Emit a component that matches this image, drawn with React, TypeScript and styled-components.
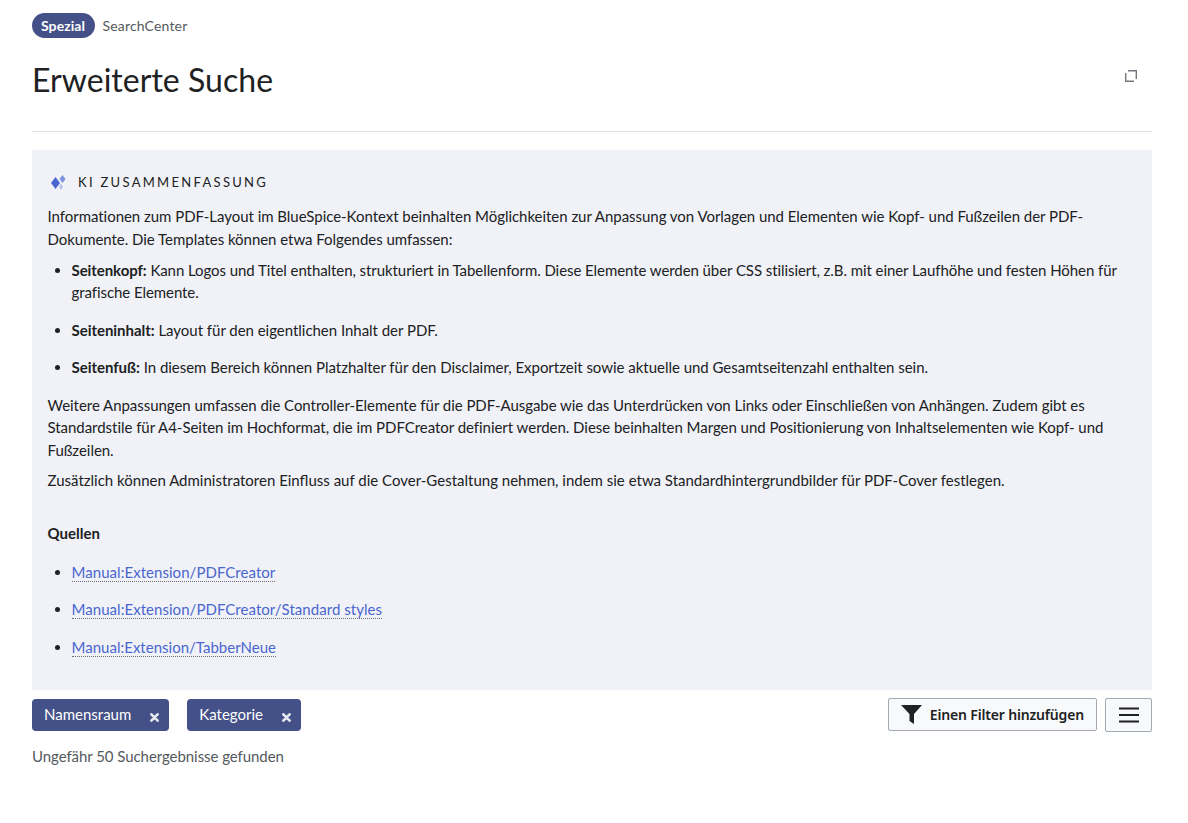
import React from 'react';
import styled, { createGlobalStyle } from 'styled-components';

const GlobalStyle = createGlobalStyle`
  html, body {
    margin: 0;
    padding: 0;
    background: #fff;
  }
  body {
    font-family: "Lato", "Liberation Sans", sans-serif;
    font-size: 15px;
    color: #202122;
  }
  * { box-sizing: border-box; }
`;

const Page = styled.div`
  width: 1188px;
  height: 823px;
  padding: 13px 36px 0 32px;
  overflow: hidden;
`;

const Crumbs = styled.div`
  display: flex;
  align-items: center;
  gap: 8px;
  height: 25px;
`;

const Pill = styled.span`
  display: inline-flex;
  align-items: center;
  height: 25px;
  padding: 0 9.5px 0 9px;
  border-radius: 13px;
  background: #445088;
  color: #fff;
  font-size: 14px;
  font-weight: 700;
  letter-spacing: 0.07px;
`;

const Crumb = styled.span`
  font-size: 14px;
  letter-spacing: 0.17px;
  color: #54595d;
`;

const TitleRow = styled.div`
  display: flex;
  justify-content: space-between;
  align-items: flex-start;
  height: 94px;
  padding-top: 22px;
  border-bottom: 1px solid #dfe0e3;
`;

const Title = styled.h1`
  margin: 0;
  font-size: 32px;
  font-weight: 400;
  line-height: 40px;
  letter-spacing: 0.04px;
  color: #202122;
`;

const ExpandButton = styled.span`
  display: block;
  margin: 8px 14px 0 0;
  width: 14px;
  height: 14px;
  color: #72777d;
`;

const Panel = styled.section`
  margin-top: 18px;
  height: 540px;
  padding: 22px 16px 0 15.5px;
  background: #f0f2f8;
  line-height: 22.5px;
`;

const PanelHead = styled.div`
  display: flex;
  align-items: center;
  gap: 12px;
  height: 20px;
  padding-left: 2.5px;
  font-size: 13px;
  letter-spacing: 2.3px;
  color: #202122;
`;

const Para = styled.p<{ $top?: number; $track?: number }>`
  margin: ${p => p.$top ?? 0}px 0 0;
  letter-spacing: ${p => p.$track ?? 0}px;
`;

const List = styled.ul<{ $top: number }>`
  margin: ${p => p.$top}px 0 0;
  padding: 0 0 0 24px;
`;

const Item = styled.li<{ $top?: number; $track?: number }>`
  margin-top: ${p => p.$top ?? 0}px;
  letter-spacing: ${p => p.$track ?? 0}px;
`;

const SourcesHead = styled.p`
  margin: 30.5px 0 0;
  font-weight: 700;
`;

const SourceLink = styled.a<{ $track?: number }>`
  color: #4a66cf;
  text-decoration: none;
  letter-spacing: ${p => p.$track ?? 0.045}px;
  border-bottom: 1px dotted #6b6f78;
`;

const FilterBar = styled.div`
  display: flex;
  justify-content: space-between;
  align-items: flex-start;
  margin-top: 8px;
`;

const Chips = styled.div`
  display: flex;
  gap: 18px;
  padding-top: 1px;
`;

const Chip = styled.span`
  display: inline-flex;
  align-items: center;
  justify-content: space-between;
  gap: 19px;
  height: 32px;
  padding: 0 10px 3px 12px;
  border-radius: 4px;
  background: #445088;
  color: #fff;
  font-size: 15px;
`;

const ChipClose = styled.svg`
  width: 9px;
  height: 9px;
  margin-top: 7px;
  fill: none;
  stroke: #e6e8f0;
  stroke-width: 2.7;
  stroke-linecap: round;
`;

const Actions = styled.div`
  display: flex;
  align-items: flex-start;
  gap: 8px;
`;

const Button = styled.button`
  display: inline-flex;
  align-items: center;
  justify-content: center;
  gap: 8px;
  height: 33px;
  padding: 0 12px;
  border: 1px solid #a2a9b1;
  border-radius: 2px;
  background: #f8f9fa;
  color: #202122;
  font-family: "Noto Sans", sans-serif;
  font-size: 14px;
  font-weight: 600;
  letter-spacing: -0.17px;
`;

const MenuButton = styled(Button)`
  width: 47px;
  height: 34px;
  padding: 0;
`;

const Count = styled.p`
  margin: 13px 0 0;
  color: #54595d;
  font-size: 15px;
  line-height: 22px;
  letter-spacing: -0.06px;
`;

const Sparkle = () => (
  <svg width="16" height="16" viewBox="0 0 16 16">
    <path d="M5.5 3 10 9 5.5 15 1 9Z" fill="#4a66cf" />
    <path d="M12.5 1 15.5 5 12.5 9 9.5 5Z" fill="#7f93dc" />
    <path d="M11 9.5 13 13 11 16 9 13Z" fill="#b6c2ec" />
  </svg>
);

const Close = () => (
  <ChipClose viewBox="0 0 9 9">
    <path d="M1.4 1.4 7.6 7.6M7.6 1.4 1.4 7.6" />
  </ChipClose>
);

const App = () => (
  <Page>
    <GlobalStyle />
    <Crumbs>
      <Pill>Spezial</Pill>
      <Crumb>SearchCenter</Crumb>
    </Crumbs>
    <TitleRow>
      <Title>Erweiterte Suche</Title>
      <ExpandButton>
        <svg width="14" height="14" viewBox="0 0 14 14" fill="none" stroke="currentColor" strokeWidth="1.4">
          <path d="M4 1.7H12.3V10M1.7 4V12.3H10" />
        </svg>
      </ExpandButton>
    </TitleRow>
    <Panel>
      <PanelHead>
        <Sparkle />
        KI ZUSAMMENFASSUNG
      </PanelHead>
      <Para $top={13} $track={-0.035}>
        Informationen zum PDF-Layout im BlueSpice-Kontext beinhalten Möglichkeiten zur Anpassung von Vorlagen und Elementen wie Kopf- und Fußzeilen der PDF-Dokumente. Die Templates können etwa Folgendes umfassen:
      </Para>
      <List $top={8.5}>
        <Item $track={-0.07}>
          <b>Seitenkopf:</b> Kann Logos und Titel enthalten, strukturiert in Tabellenform. Diese Elemente werden über CSS stilisiert, z.B. mit einer Laufhöhe und festen Höhen für grafische Elemente.
        </Item>
        <Item $top={15} $track={-0.03}>
          <b>Seiteninhalt:</b> Layout für den eigentlichen Inhalt der PDF.
        </Item>
        <Item $top={15} $track={-0.025}>
          <b>Seitenfuß:</b> In diesem Bereich können Platzhalter für den Disclaimer, Exportzeit sowie aktuelle und Gesamtseitenzahl enthalten sein.
        </Item>
      </List>
      <Para $top={15} $track={-0.04}>
        Weitere Anpassungen umfassen die Controller-Elemente für die PDF-Ausgabe wie das Unterdrücken von Links oder Einschließen von Anhängen. Zudem gibt es Standardstile für A4-Seiten im Hochformat, die im PDFCreator definiert werden. Diese beinhalten Margen und Positionierung von Inhaltselementen wie Kopf- und Fußzeilen.
      </Para>
      <Para $top={7.5}>
        Zusätzlich können Administratoren Einfluss auf die Cover-Gestaltung nehmen, indem sie etwa Standardhintergrundbilder für PDF-Cover festlegen.
      </Para>
      <SourcesHead>Quellen</SourcesHead>
      <List $top={16.5}>
        <Item><SourceLink>Manual:Extension/PDFCreator</SourceLink></Item>
        <Item $top={15}><SourceLink>Manual:Extension/PDFCreator/Standard styles</SourceLink></Item>
        <Item $top={15}><SourceLink $track={0.01}>Manual:Extension/TabberNeue</SourceLink></Item>
      </List>
    </Panel>
    <FilterBar>
      <Chips>
        <Chip>Namensraum <Close /></Chip>
        <Chip>Kategorie <Close /></Chip>
      </Chips>
      <Actions>
        <Button>
          <svg width="21" height="19" viewBox="0 0 21 19" fill="#202122">
            <path d="M0 0H21L13 9V19L8.5 16V9Z" />
          </svg>
          Einen Filter hinzufügen
        </Button>
        <MenuButton aria-label="Menü">
          <svg width="20" height="16" viewBox="0 0 20 16" fill="#202122">
            <rect y="0.5" width="20" height="2" />
            <rect y="7" width="20" height="2" />
            <rect y="13.5" width="20" height="2" />
          </svg>
        </MenuButton>
      </Actions>
    </FilterBar>
    <Count>Ungefähr 50 Suchergebnisse gefunden</Count>
  </Page>
);

export default App;
